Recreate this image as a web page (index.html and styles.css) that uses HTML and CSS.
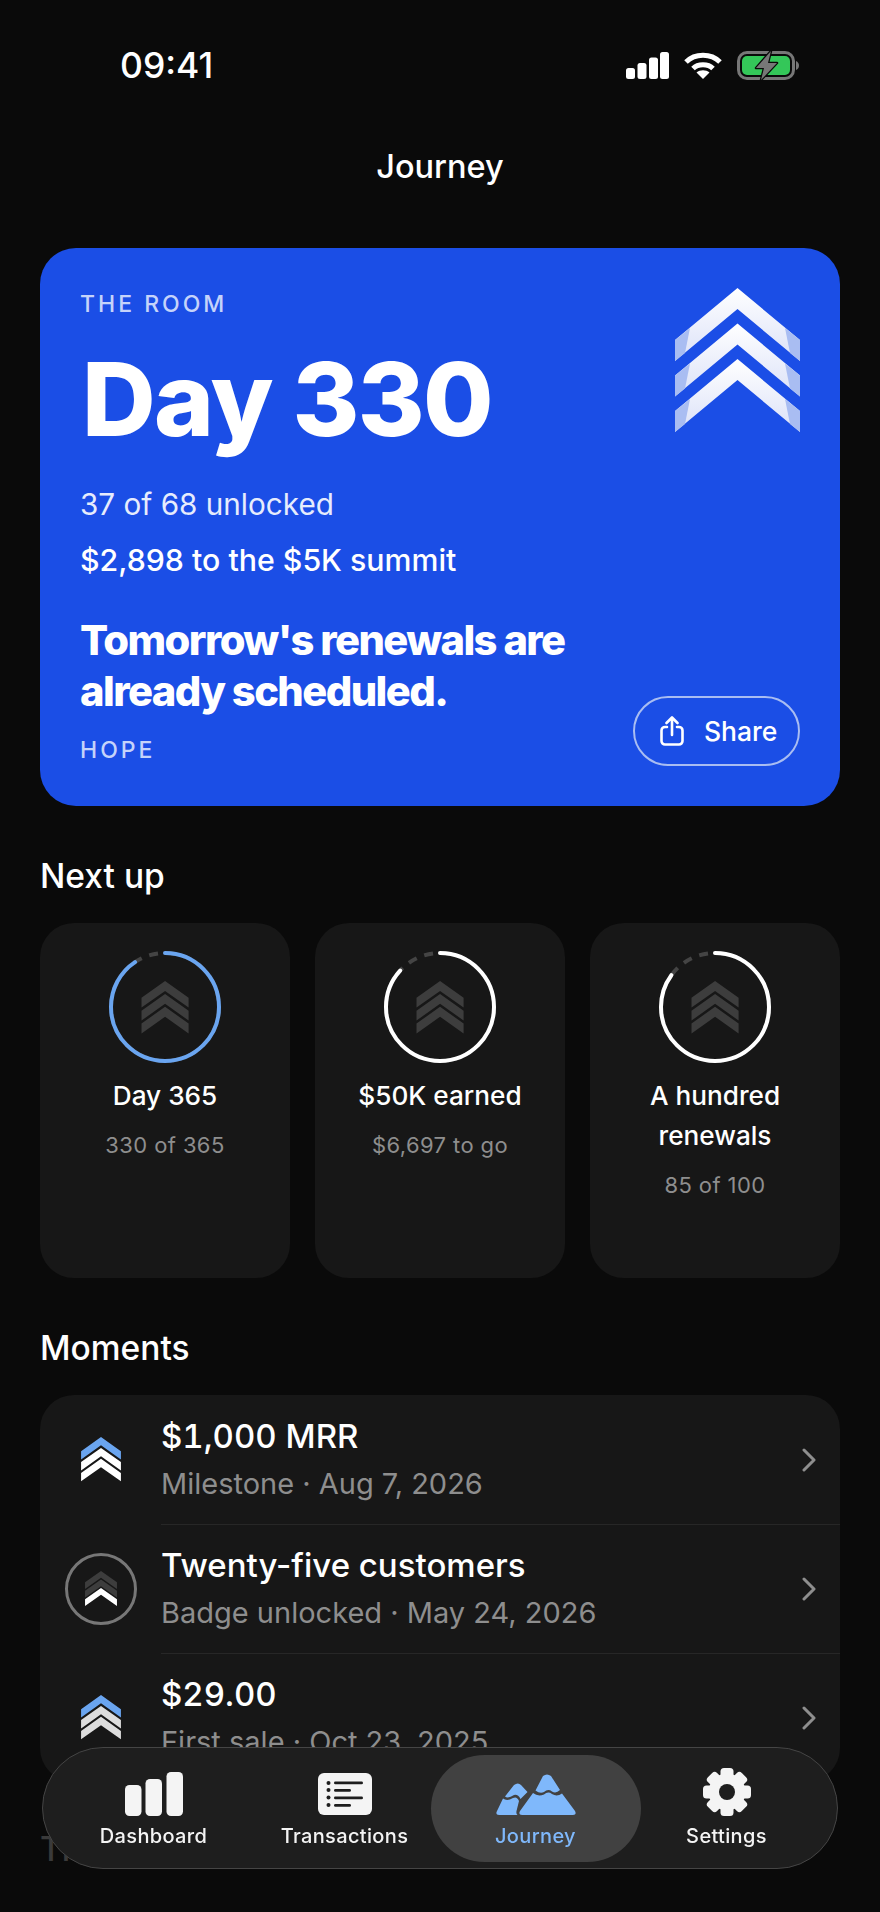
FILE: index.html
```html
<!DOCTYPE html>
<html lang="en">
<head>
    <meta charset="UTF-8">
    <meta name="viewport" content="width=device-width, initial-scale=1.0">
    <title>Journey</title>
    <link rel="stylesheet" href="styles.css">
</head>
<body>
    <svg class="defs" width="0" height="0">
        <defs>
            <linearGradient id="chevFill" x1="0" y1="0" x2="0" y2="1">
                <stop offset="0" stop-color="#ffffff"/>
                <stop offset="1" stop-color="#dbe1f8"/>
            </linearGradient>
            <polygon id="chev" points="31,0 62,22 62,35 31,13 0,35 0,22"/>
        </defs>
    </svg>

    <div class="status-bar">
        <span class="time">09:41</span>
        <div class="status-icons">
            <svg width="43" height="27" viewBox="0 0 43 27" fill="#fff">
                <rect x="0" y="16" width="9" height="11" rx="2.5"/>
                <rect x="11.5" y="11" width="9" height="16" rx="2.5"/>
                <rect x="23" y="5.5" width="9" height="21.5" rx="2.5"/>
                <rect x="34" y="0" width="9" height="27" rx="2.5"/>
            </svg>
            <svg width="38" height="27" viewBox="0 0 38 27" fill="none" stroke="#fff" stroke-width="5">
                <path d="M2 10 C11 1 27 1 36 10"/>
                <path d="M9 16.5 C14 11.5 24 11.5 29 16.5"/>
                <path d="M19 27 L12.5 20.5 C16 17.5 22 17.5 25.5 20.5 Z" fill="#fff" stroke="none"/>
            </svg>
            <svg width="62" height="29" viewBox="0 0 62 29">
                <rect x="1.5" y="1.5" width="55" height="26" rx="8.5" fill="none" stroke="#777" stroke-width="3"/>
                <rect x="5" y="5" width="48" height="19" rx="5" fill="#34c759"/>
                <path d="M59 10 C61 11 62 12.5 62 14.5 C62 16.5 61 18 59 19 Z" fill="#777"/>
                <path d="M34 0 L19 17 H27 L24 29 L40 12 H31 Z" fill="#777" stroke="#0a0a0a" stroke-width="2.5" stroke-linejoin="round" paint-order="stroke"/>
            </svg>
        </div>
    </div>

    <div class="nav-title">Journey</div>

    <div class="page">
        <div class="room-card">
            <div class="room-top">
                <div>
                    <div class="eyebrow">THE ROOM</div>
                    <div class="day">Day 330</div>
                    <div class="room-line">37 of 68 unlocked</div>
                    <div class="room-line strong">$2,898 to the $5K summit</div>
                </div>
                <svg class="room-badge" width="125" height="145" viewBox="0 0 125 145">
                    <g id="roomChev">
                        <polygon points="62.5,0 125,52 125,73 62.5,21 0,73 0,52" fill="url(#chevFill)"/>
                        <polygon points="0,52 15,40 10,65 0,73" fill="#a9bdf2"/>
                        <polygon points="125,52 110,40 115,65 125,73" fill="#a9bdf2"/>
                    </g>
                    <use href="#roomChev" y="35.5"/>
                    <use href="#roomChev" y="71"/>
                </svg>
            </div>
            <div class="room-bottom">
                <div>
                    <div class="quote">Tomorrow's renewals are<br>already scheduled.</div>
                    <div class="eyebrow quote-by">HOPE</div>
                </div>
                <div class="share">
                    <svg width="24" height="30" viewBox="0 0 24 30" fill="none" stroke="#fff" stroke-width="2.6" stroke-linecap="round" stroke-linejoin="round">
                        <path d="M7 11 H5 a3.5 3.5 0 0 0 -3.5 3.5 V25 a3.5 3.5 0 0 0 3.5 3.5 H19 a3.5 3.5 0 0 0 3.5 -3.5 V14.5 A3.5 3.5 0 0 0 19 11 H17"/>
                        <path d="M12 19 V2 M6.5 7 L12 1.5 L17.500 7"/>
                    </svg>
                    <span>Share</span>
                </div>
            </div>
        </div>

        <h2 class="section-title">Next up</h2>
        <div class="goals">
            <div class="goal">
                <svg class="ring" width="112" height="112" viewBox="0 0 112 112">
                    <circle class="ring-track" cx="56" cy="56" r="54"/>
                    <circle class="ring-value blue" cx="56" cy="56" r="54" stroke-dasharray="307 339.3"/>
                    <g class="chev-dim" transform="translate(32.500 30) scale(.76)">
                        <use href="#chev"/><use href="#chev" y="17"/><use href="#chev" y="34"/>
                    </g>
                </svg>
                <div class="goal-name">Day 365</div>
                <div class="goal-sub">330 of 365</div>
            </div>
            <div class="goal">
                <svg class="ring" width="112" height="112" viewBox="0 0 112 112">
                    <circle class="ring-track" cx="56" cy="56" r="54"/>
                    <circle class="ring-value" cx="56" cy="56" r="54" stroke-dasharray="294 339.3"/>
                    <g class="chev-dim" transform="translate(32.500 30) scale(.76)">
                        <use href="#chev"/><use href="#chev" y="17"/><use href="#chev" y="34"/>
                    </g>
                </svg>
                <div class="goal-name">$50K earned</div>
                <div class="goal-sub">$6,697 to go</div>
            </div>
            <div class="goal">
                <svg class="ring" width="112" height="112" viewBox="0 0 112 112">
                    <circle class="ring-track" cx="56" cy="56" r="54"/>
                    <circle class="ring-value" cx="56" cy="56" r="54" stroke-dasharray="288 339.3"/>
                    <g class="chev-dim" transform="translate(32.500 30) scale(.76)">
                        <use href="#chev"/><use href="#chev" y="17"/><use href="#chev" y="34"/>
                    </g>
                </svg>
                <div class="goal-name">A hundred<br>renewals</div>
                <div class="goal-sub">85 of 100</div>
            </div>
        </div>

        <h2 class="section-title">Moments</h2>
        <div class="moments">
            <div class="moment">
                <div class="moment-icon">
                    <svg width="40" height="45" viewBox="0 0 62 70">
                        <use href="#chev" fill="#6aa5f0"/>
                        <use href="#chev" y="17" fill="#fff"/>
                        <use href="#chev" y="34" fill="#fff"/>
                    </svg>
                </div>
                <div class="moment-body">
                    <div class="moment-text">
                        <div class="moment-name num">$1,000 MRR</div>
                        <div class="moment-sub">Milestone · Aug 7, 2026</div>
                    </div>
                    <svg class="caret" width="14" height="24" viewBox="0 0 14 24"><path d="M2 2 L12 12 L2 22"/></svg>
                </div>
            </div>
            <div class="moment">
                <div class="moment-icon">
                    <div class="badge-ring">
                        <svg width="32" height="35" viewBox="0 0 62 68">
                            <use href="#chev" fill="#3d3d3d"/>
                            <use href="#chev" y="16.500" fill="#3d3d3d"/>
                            <use href="#chev" y="33" fill="#fff"/>
                        </svg>
                    </div>
                </div>
                <div class="moment-body">
                    <div class="moment-text">
                        <div class="moment-name">Twenty-five customers</div>
                        <div class="moment-sub">Badge unlocked · May 24, 2026</div>
                    </div>
                    <svg class="caret" width="14" height="24" viewBox="0 0 14 24"><path d="M2 2 L12 12 L2 22"/></svg>
                </div>
            </div>
            <div class="moment">
                <div class="moment-icon">
                    <svg width="40" height="45" viewBox="0 0 62 70">
                        <use href="#chev" fill="#6aa5f0"/>
                        <use href="#chev" y="17" fill="#ddd"/>
                        <use href="#chev" y="34" fill="#ddd"/>
                    </svg>
                </div>
                <div class="moment-body">
                    <div class="moment-text">
                        <div class="moment-name num">$29.00</div>
                        <div class="moment-sub">First sale · Oct 23, 2025</div>
                    </div>
                    <svg class="caret" width="14" height="24" viewBox="0 0 14 24"><path d="M2 2 L12 12 L2 22"/></svg>
                </div>
            </div>
        </div>

        <h2 class="section-title faded">The Trail</h2>
    </div>

    <div class="tab-bar">
        <div class="tab">
            <svg width="58" height="44" viewBox="0 0 58 44" fill="#f4f4f4">
                <rect x="0" y="13" width="16.500" height="31" rx="4.500"/>
                <rect x="20.500" y="7" width="16.500" height="37" rx="4.500"/>
                <rect x="41.500" y="0" width="16.500" height="44" rx="4.500"/>
            </svg>
            <span>Dashboard</span>
        </div>
        <div class="tab">
            <svg width="54" height="44" viewBox="0 0 54 44">
                <rect width="54" height="42" y="1" rx="6" fill="#f4f4f4"/>
                <g fill="#1e1e1e">
                    <circle cx="10.500" cy="11" r="2"/><circle cx="10.500" cy="18" r="2"/><circle cx="10.500" cy="25.500" r="2"/><circle cx="10.500" cy="33" r="2"/>
                    <rect x="16" y="9.500" width="29" height="2.800" rx="1.400"/>
                    <rect x="16" y="17" width="17" height="2.800" rx="1.400"/>
                    <rect x="16" y="24.500" width="29" height="2.800" rx="1.400"/>
                    <rect x="16" y="32" width="17" height="2.800" rx="1.400"/>
                </g>
            </svg>
            <span>Transactions</span>
        </div>
        <div class="tab active">
            <svg width="80" height="42" viewBox="0 0 80 42" fill="#7fb8fb">
                <path d="M18 11 Q22 8 25 11 L31.500 18 L24.500 25 Q22 20 18 21 Q12 25 9 22.500 Z"/>
                <path d="M7 24.500 Q11 27.500 17 24 Q21 22 23 27 L20.500 37 Q20 40 21.500 41 H3 Q-1 41 1 37 Z"/>
                <path d="M47 2 Q51 -1 55 2 L64 16 Q60 20 56 17.500 Q52 14.500 48 18 Q44 20 39.500 16.500 Z"/>
                <path d="M37 19 Q42 23 48 20.500 Q52 17 56 20 Q61 23 66 19.500 L79 37 Q81 41 77 41 H26 Q22 41 24 37 Z"/>
            </svg>
            <span>Journey</span>
        </div>
        <div class="tab">
            <svg width="48" height="48" viewBox="0 0 48 48" fill="#f4f4f4">
                <circle cx="24" cy="24" r="18.500"/>
                <rect x="17.500" y="0" width="13" height="48" rx="3.500"/>
                <rect x="17.500" y="0" width="13" height="48" rx="3.500" transform="rotate(45 24 24)"/>
                <rect x="17.500" y="0" width="13" height="48" rx="3.500" transform="rotate(90 24 24)"/>
                <rect x="17.500" y="0" width="13" height="48" rx="3.500" transform="rotate(135 24 24)"/>
                <circle cx="24" cy="24" r="8" fill="#1e1e1e"/>
            </svg>
            <span>Settings</span>
        </div>
    </div>
</body>
</html>
```

FILE: styles.css
```css
* {
    box-sizing: border-box;
}
html, body {
    margin: 0;
    height: 1912px;
    overflow: hidden;
}
body {
    background: #0a0a0a;
    color: #fff;
    font-family: Inter, "Liberation Sans", sans-serif;
}
.defs {
    position: absolute;
}
.status-bar {
    display: flex;
    justify-content: space-between;
    align-items: center;
    height: 130px;
    padding: 0 81px 0 120px;
}
.time {
    font-size: 35.5px;
    font-weight: 500;
}
.status-icons {
    display: flex;
    align-items: center;
    gap: 15px;
}
.nav-title {
    text-align: center;
    font-size: 32.5px;
    font-weight: 500;
    line-height: 74px;
    height: 118px;
}
.page {
    padding: 0 40px;
}
.room-card {
    height: 558px;
    background: #1b4ee6;
    border-radius: 36px;
    padding: 42px 40px 40px;
    display: flex;
    flex-direction: column;
    justify-content: space-between;
}
.room-top {
    display: flex;
    justify-content: space-between;
    align-items: flex-start;
}
.room-badge {
    margin-top: -2px;
}
.eyebrow {
    font-size: 23px;
    font-weight: 500;
    letter-spacing: 3px;
    line-height: 28px;
    color: #c5d3fa;
}
.day {
    font-size: 102px;
    font-weight: 800;
    letter-spacing: -1.7px;
    line-height: 120px;
    margin: 21px 0 24px 2px;
}
.room-line {
    font-size: 29.7px;
    line-height: 42px;
    color: #e6ecfd;
    margin-bottom: 14px;
}
.room-line.strong {
    font-size: 30.3px;
    color: #fff;
    font-weight: 500;
}
.room-bottom {
    display: flex;
    justify-content: space-between;
    align-items: flex-end;
}
.quote {
    font-size: 41.7px;
    font-weight: 800;
    letter-spacing: -1.6px;
    line-height: 51px;
}
.quote-by {
    margin: 19px 0 2.5px;
}
.share {
    display: flex;
    align-items: center;
    gap: 20px;
    width: 167px;
    height: 70px;
    padding-left: 25px;
    border: 2px solid #a9bdf2;
    border-radius: 35px;
    font-size: 26.5px;
    font-weight: 500;
}
.section-title {
    font-size: 33.5px;
    font-weight: 500;
    line-height: 40px;
    margin: 50px 0 27px;
}
.goals {
    display: flex;
    gap: 25px;
}
.goal {
    flex: 1;
    height: 355px;
    background: #171717;
    border-radius: 34px;
    padding-top: 28px;
    text-align: center;
}
.ring {
    display: block;
    margin: 0 auto 13px;
}
.ring-track {
    fill: none;
    stroke: #444;
    stroke-width: 4;
    stroke-dasharray: 9 8;
}
.ring-value {
    fill: none;
    stroke: #fff;
    stroke-width: 4;
    stroke-linecap: round;
    transform: rotate(-90deg);
    transform-origin: 56px 56px;
}
.ring-value.blue {
    stroke: #6aa5f0;
}
.chev-dim {
    fill: #3d3d3d;
}
.goal-name {
    font-size: 26.2px;
    font-weight: 500;
    line-height: 40px;
}
.goal-sub {
    font-size: 22px;
    letter-spacing: .4px;
    line-height: 30px;
    margin-top: 14px;
    color: #8e8e8e;
}
.moments {
    background: #171717;
    border-radius: 34px;
    overflow: hidden;
}
.moment {
    display: flex;
    height: 129px;
}
.moment-icon {
    flex: 0 0 121px;
    display: flex;
    align-items: center;
    justify-content: center;
}
.badge-ring {
    display: flex;
    align-items: center;
    justify-content: center;
    width: 72px;
    height: 72px;
    border: 3px solid #777;
    border-radius: 50%;
}
.moment-body {
    flex: 1;
    display: flex;
    align-items: center;
    padding-right: 24px;
}
.moment + .moment .moment-body {
    border-top: 1px solid #272727;
}
.moment-text {
    flex: 1;
}
.moment-name {
    font-size: 33px;
    font-weight: 500;
    line-height: 44px;
    margin-bottom: 4px;
}
.moment-name.num {
    font-variant-numeric: tabular-nums;
}
.moment-sub {
    font-size: 29px;
    line-height: 44px;
    color: #8e8e8e;
}
.caret {
    fill: none;
    stroke: #8e8e8e;
    stroke-width: 3;
    stroke-linecap: round;
    stroke-linejoin: round;
}
.faded {
    color: #3a3a3a;
    margin-top: 47px;
}
.tab-bar {
    position: fixed;
    left: 42px;
    top: 1747px;
    width: 796px;
    height: 122px;
    display: grid;
    grid-template-columns: repeat(4, 1fr);
    align-items: center;
    padding: 0 15px;
    background: #1e1e1e;
    border: 1.500px solid #454545;
    border-radius: 61px;
}
.tab {
    height: 107px;
    display: flex;
    flex-direction: column;
    align-items: center;
    justify-content: flex-end;
    gap: 8px;
    padding-bottom: 14px;
    font-size: 20px;
    font-weight: 500;
    letter-spacing: .35px;
    color: #f4f4f4;
}
.tab.active {
    margin: 0 -9.5px;
    color: #7fb8fb;
    background: #414141;
    border-radius: 54px;
}
```
